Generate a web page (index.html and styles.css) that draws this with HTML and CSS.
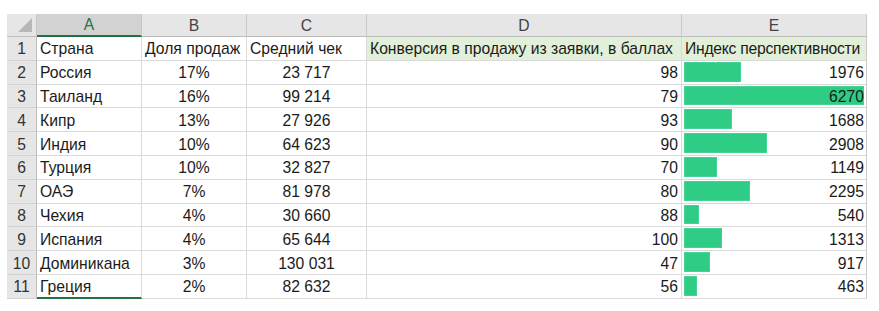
FILE: index.html
```html
<!DOCTYPE html>
<html lang="ru">
<head>
<meta charset="utf-8">
<link rel="stylesheet" href="styles.css">
</head>
<body>
<div class="sheet">
  <div class="grid">
    <div class="corner"><span class="tri"></span></div>
    <div class="ch sel">A</div>
    <div class="ch">B</div>
    <div class="ch">C</div>
    <div class="ch">D</div>
    <div class="ch last">E</div>

    <div class="rh">1</div>
    <div class="c l">Страна</div>
    <div class="c l">Доля продаж</div>
    <div class="c l">Средний чек</div>
    <div class="c l hl">Конверсия в продажу из заявки, в баллах</div>
    <div class="c l hl last tight">Индекс перспективности</div>

    <div class="rh">2</div>
    <div class="c l">Россия</div>
    <div class="c m">17%</div>
    <div class="c m">23 717</div>
    <div class="c r">98</div>
    <div class="c r bar last"><span class="db" style="--w:0.3152"></span><span class="v">1976</span></div>

    <div class="rh">3</div>
    <div class="c l">Таиланд</div>
    <div class="c m">16%</div>
    <div class="c m">99 214</div>
    <div class="c r">79</div>
    <div class="c r bar last"><span class="db" style="--w:1"></span><span class="v">6270</span></div>

    <div class="rh">4</div>
    <div class="c l">Кипр</div>
    <div class="c m">13%</div>
    <div class="c m">27 926</div>
    <div class="c r">93</div>
    <div class="c r bar last"><span class="db" style="--w:0.2692"></span><span class="v">1688</span></div>

    <div class="rh">5</div>
    <div class="c l">Индия</div>
    <div class="c m">10%</div>
    <div class="c m">64 623</div>
    <div class="c r">90</div>
    <div class="c r bar last"><span class="db" style="--w:0.4638"></span><span class="v">2908</span></div>

    <div class="rh">6</div>
    <div class="c l">Турция</div>
    <div class="c m">10%</div>
    <div class="c m">32 827</div>
    <div class="c r">70</div>
    <div class="c r bar last"><span class="db" style="--w:0.1833"></span><span class="v">1149</span></div>

    <div class="rh">7</div>
    <div class="c l">ОАЭ</div>
    <div class="c m">7%</div>
    <div class="c m">81 978</div>
    <div class="c r">80</div>
    <div class="c r bar last"><span class="db" style="--w:0.366"></span><span class="v">2295</span></div>

    <div class="rh">8</div>
    <div class="c l">Чехия</div>
    <div class="c m">4%</div>
    <div class="c m">30 660</div>
    <div class="c r">88</div>
    <div class="c r bar last"><span class="db" style="--w:0.0861"></span><span class="v">540</span></div>

    <div class="rh">9</div>
    <div class="c l">Испания</div>
    <div class="c m">4%</div>
    <div class="c m">65 644</div>
    <div class="c r">100</div>
    <div class="c r bar last"><span class="db" style="--w:0.2094"></span><span class="v">1313</span></div>

    <div class="rh">10</div>
    <div class="c l">Доминикана</div>
    <div class="c m">3%</div>
    <div class="c m">130 031</div>
    <div class="c r">47</div>
    <div class="c r bar last"><span class="db" style="--w:0.1463"></span><span class="v">917</span></div>

    <div class="rh">11</div>
    <div class="c l active">Греция</div>
    <div class="c m">2%</div>
    <div class="c m">82 632</div>
    <div class="c r">56</div>
    <div class="c r bar last"><span class="db" style="--w:0.0738"></span><span class="v">463</span></div>
  </div>
</div>
</body>
</html>
```

FILE: styles.css
```css
html, body {
  margin: 0;
  padding: 0;
  background: #ffffff;
}

.sheet {
  padding: 14px 0 0 7px;
}

.grid {
  display: grid;
  grid-template-columns: 30px 105px 105px 120px 315px 185px;
  grid-template-rows: 23px;
  grid-auto-rows: 23.8px;
  width: 860px;
  font-family: "Liberation Sans", Arial, sans-serif;
  font-size: 15.7px;
  color: #1b1b1b;
}

.corner {
  background: #e6e6e6;
  border-right: 1px solid #c9c9c9;
  border-bottom: 1px solid #bdbdbd;
  position: relative;
}

.tri {
  position: absolute;
  right: 4px;
  bottom: 4px;
  width: 0;
  height: 0;
  border-left: 14px solid transparent;
  border-bottom: 14px solid #b7b7b7;
}

.ch {
  background: #e6e6e6;
  border-right: 1px solid #c9c9c9;
  border-bottom: 1px solid #bdbdbd;
  display: flex;
  align-items: center;
  justify-content: center;
  padding-top: 1px;
  color: #444444;
  font-size: 15.7px;
}

.ch.sel {
  background: #d2d2d2;
  color: #217346;
  border-bottom: 2px solid #217346;
}

.rh {
  background: #e6e6e6;
  border-right: 1px solid #bdbdbd;
  border-bottom: 1px solid #d4d4d4;
  display: flex;
  align-items: center;
  justify-content: center;
  padding-top: 2px;
  color: #333333;
}

.c {
  border-right: 1px solid #dadada;
  border-bottom: 1px solid #dadada;
  display: flex;
  align-items: center;
  white-space: nowrap;
  overflow: visible;
  padding: 2px 3px 0 3px;
  position: relative;
}

.c.l { justify-content: flex-start; }
.c.m { justify-content: center; }
.c.r { justify-content: flex-end; }

.c.last { border-right: 1px solid #c9c9c9; }

.c.tight {
  letter-spacing: -0.25px;
}

.hl {
  background: #e2f0d9;
}

.c.active {
  border-bottom: 2px solid #217346;
}

.bar {
  padding-right: 2px;
}

.db {
  position: absolute;
  left: 2px;
  top: 1px;
  bottom: 2px;
  width: calc((100% - 4px) * var(--w));
  background: #2ecc85;
  border: 1px solid #45d394;
  box-sizing: border-box;
}

.v {
  position: relative;
}
```
